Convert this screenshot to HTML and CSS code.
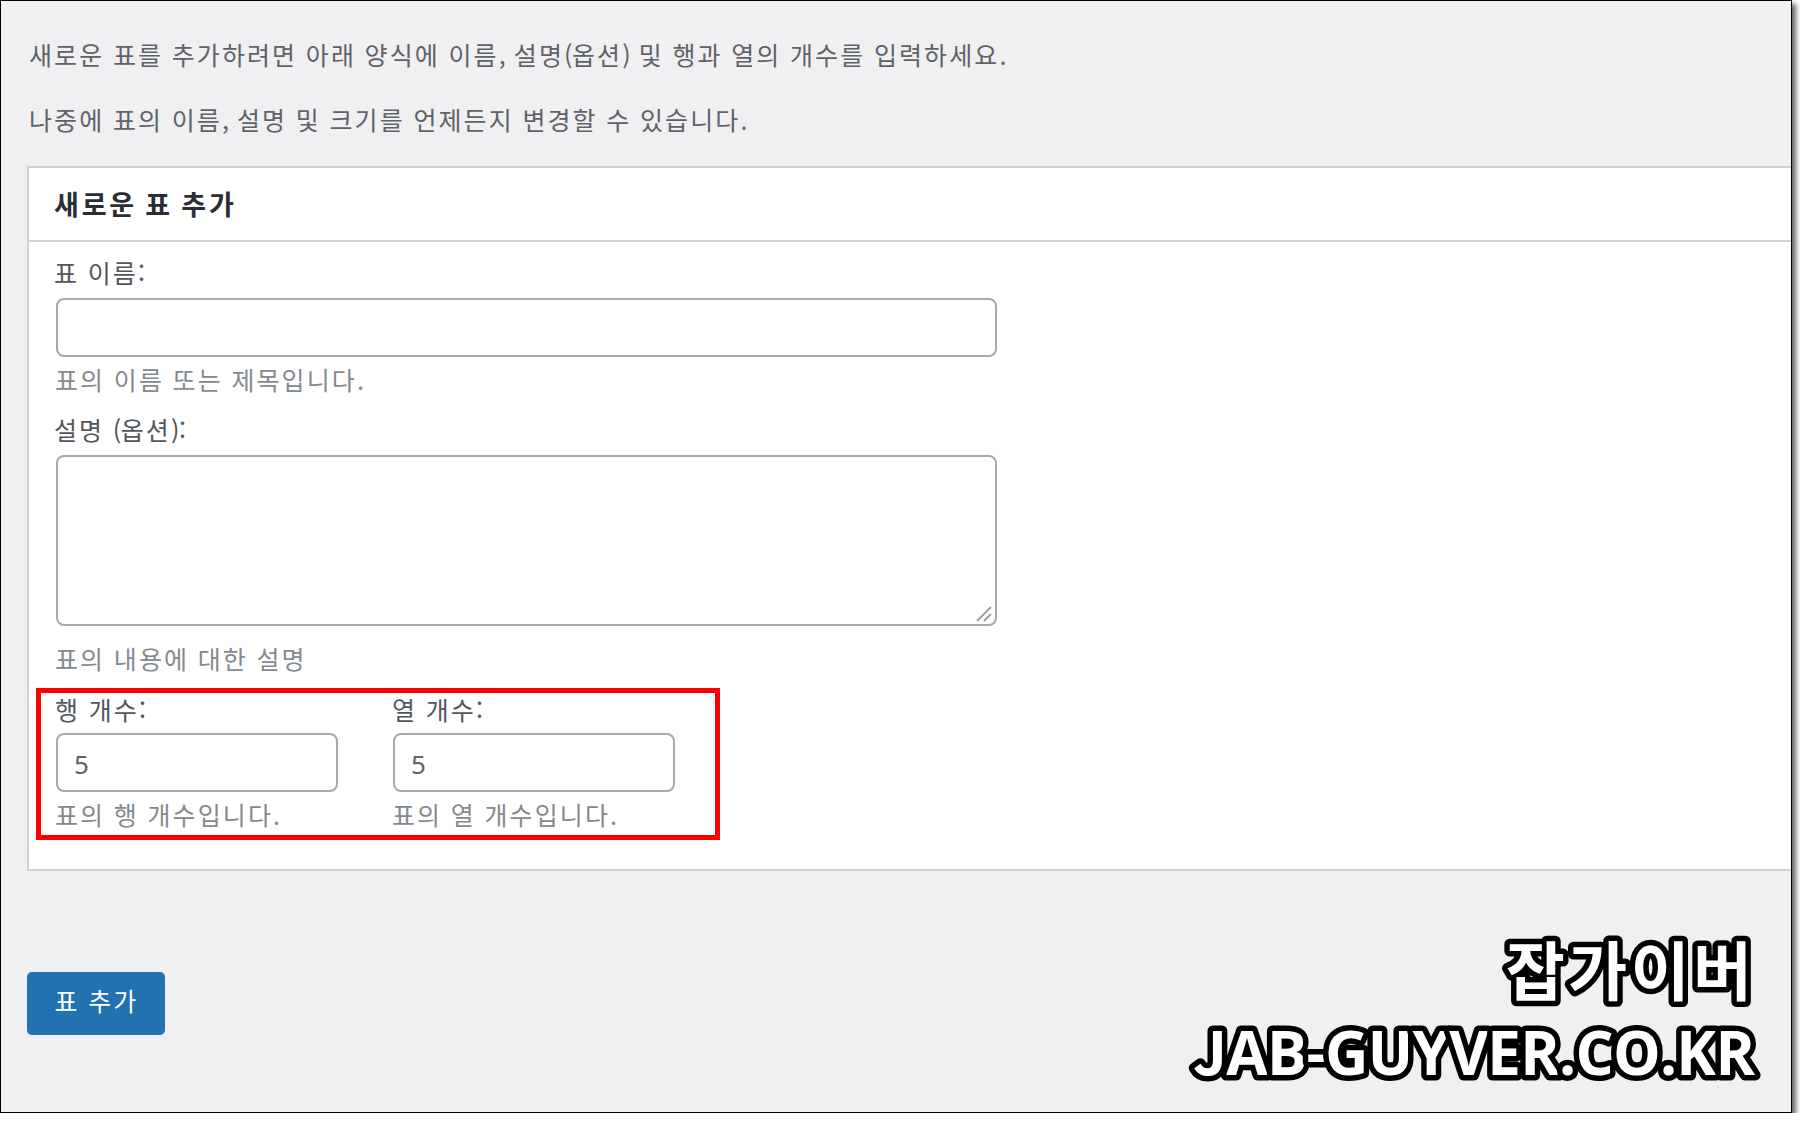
FILE: index.html
```html
<!DOCTYPE html>
<html lang="ko">
<head>
<meta charset="utf-8">
<title>새로운 표 추가</title>
<link rel="stylesheet" href="styles.css">
</head>
<body>
<main class="frame">
  <p class="intro">새로운 표를 추가하려면 아래 양식에 이름<span class="tight">,</span> 설명<span class="tight">(</span>옵션<span class="tight">)</span> 및 행과 열의 개수를 입력하세요.</p>
  <p class="intro">나중에 표의 이름<span class="tight">,</span> 설명 및 크기를 언제든지 변경할 수 있습니다.</p>
  <section class="card">
    <h2 class="card-title">새로운 표 추가</h2>
    <form class="card-body">
      <div class="field field-name">
        <label class="label" for="name">표 이름<span class="tight">:</span></label>
        <input class="control" id="name" type="text">
        <p class="hint">표의 이름 또는 제목입니다.</p>
      </div>
      <div class="field field-description">
        <label class="label" for="description">설명 <span class="tight">(</span>옵션<span class="tight">):</span></label>
        <div class="area-wrap">
          <textarea class="control area" id="description"></textarea>
          <svg class="grip" width="16" height="16" viewBox="0 0 16 16"><path d="M1 15 15 1M8 15 15 8"/></svg>
        </div>
        <p class="hint">표의 내용에 대한 설명</p>
      </div>
      <div class="sizes">
        <div class="field">
          <label class="label" for="rows">행 개수<span class="tight">:</span></label>
          <input class="control" id="rows" type="text" value="5">
          <p class="hint">표의 행 개수입니다.</p>
        </div>
        <div class="field">
          <label class="label" for="columns">열 개수<span class="tight">:</span></label>
          <input class="control" id="columns" type="text" value="5">
          <p class="hint">표의 열 개수입니다.</p>
        </div>
        <div class="highlight"></div>
      </div>
    </form>
  </section>
  <button class="submit" type="button">표 추가</button>
  <svg class="watermark" width="610" height="200" viewBox="0 0 610 200">
    <text class="mark-ko" x="338" y="96" textLength="246">잡가이버</text>
    <text class="mark-en" x="25" y="176" textLength="562"><tspan class="mark-j">J</tspan>AB-GUYVER.CO.KR</text>
  </svg>
</main>
</body>
</html>
```
FILE: styles.css
```css
* { box-sizing: border-box; }
body {
  margin: 0;
  background: #fff;
  overflow: hidden;
  font-family: "Noto Sans CJK KR", sans-serif;
}
.frame {
  position: relative;
  width: 1792px;
  height: 1113px;
  padding: 27px 0 0 26px;
  border: 1px solid #000;
  background: #f0f0f2;
  box-shadow: 4px 4px 5px rgba(0, 0, 0, .6);
}
.intro, .label, .hint, .submit {
  font-size: 25px;
  line-height: 36px;
  letter-spacing: 2.1px;
  word-spacing: -.5px;
  white-space: nowrap;
}
.tight { letter-spacing: -.5px; }
.intro {
  margin: 8px 0 29px 2px;
  color: #5f6267;
}
.intro + .intro { margin-bottom: 29px; }
.card {
  height: 705px;
  border: 2px solid #d0d1d3;
  border-right: 0;
  background: #fff;
}
.card-title {
  height: 74px;
  margin: 0;
  padding-left: 25px;
  border-bottom: 2px solid #d0d1d3;
  color: #2a2d33;
  font-size: 27px;
  font-weight: 700;
  line-height: 71px;
  letter-spacing: 2.8px;
  word-spacing: -2px;
}
.card-body { padding: 12px 0 0 27px; }
.field { display: flex; flex-direction: column; }
.label { height: 44px; margin-left: -2px; color: #53565b; }
.hint { margin: 4px 0 0 -1px; color: #85898e; }
.control {
  width: 941px;
  height: 59px;
  margin: 0;
  padding: 2px 16px 0;
  border: 2px solid #a8a9ab;
  border-radius: 8px;
  outline: 0;
  background: #fff;
  color: #5f6267;
  font: 26px/36px "Noto Sans", sans-serif;
}
.field-description { margin-top: 14px; }
.area-wrap { position: relative; height: 171px; }
.area { display: block; height: 171px; resize: none; }
.area-wrap + .hint { margin-top: 14px; }
.grip {
  position: absolute;
  left: 920px;
  bottom: 4px;
  fill: none;
  stroke: #a0a1a3;
  stroke-width: 2;
}
.sizes {
  position: relative;
  display: flex;
  gap: 55px;
  margin-top: 15px;
}
.sizes .label { height: 42px; margin-left: -1px; }
.sizes .control { width: 282px; }
.highlight {
  position: absolute;
  left: -20px;
  top: -3px;
  width: 684px;
  height: 152px;
  border: 5px solid #fe0000;
}
.submit {
  display: block;
  width: 138px;
  height: 63px;
  margin-top: 101px;
  padding: 0 0 7px 1px;
  border: 0;
  border-radius: 5px;
  background: #2271b1;
  color: #fff;
  font-family: inherit;
}
.watermark {
  position: absolute;
  left: 1167px;
  top: 898px;
  fill: #fff;
  stroke: #000;
  stroke-width: 11px;
  stroke-linejoin: round;
  paint-order: stroke fill;
}
.mark-ko {
  font: 700 64px "Noto Sans CJK KR", sans-serif;
}
.mark-en {
  font: 700 60px "Open Sans", sans-serif;
}
.mark-j {
  font-family: "Noto Sans CJK KR", sans-serif;
}
```
